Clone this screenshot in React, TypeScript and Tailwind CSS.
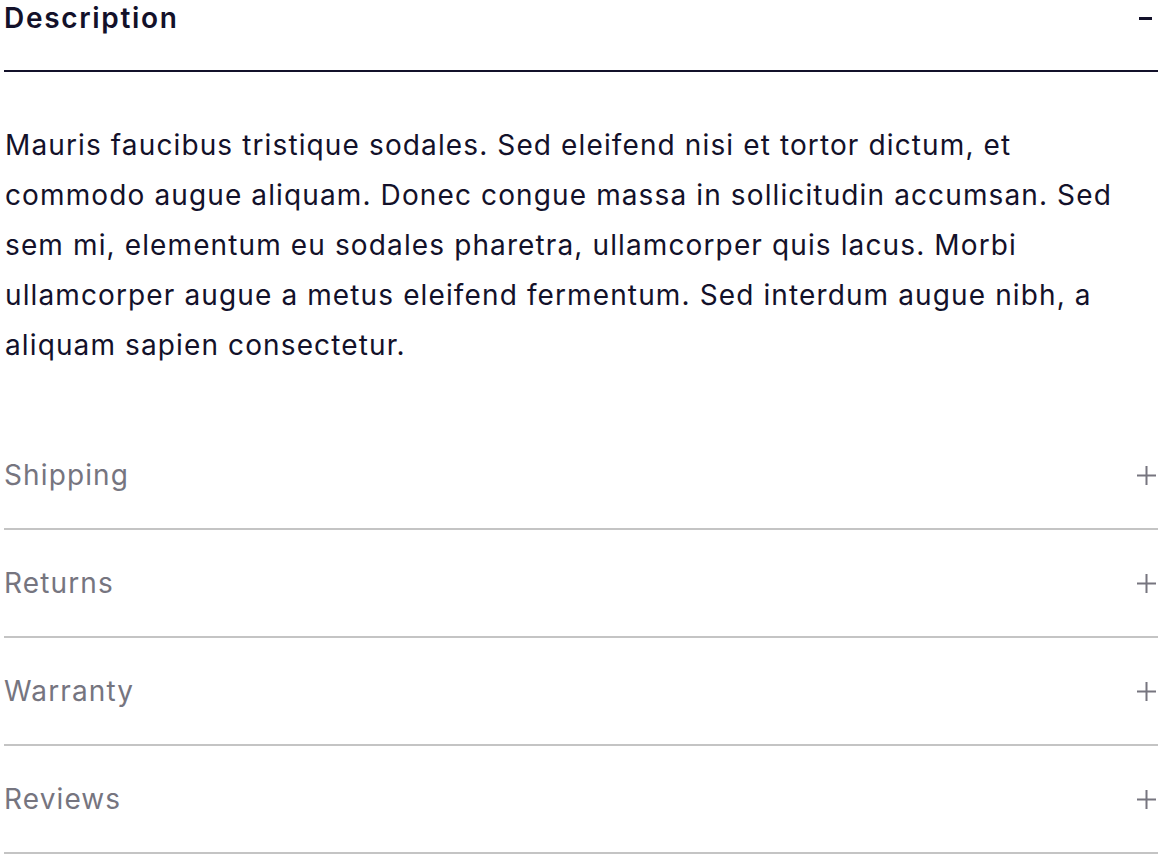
import { useState } from 'react';

const sections = ['Shipping', 'Returns', 'Warranty', 'Reviews'];

function PlusIcon() {
  return (
    <svg width="19" height="19" viewBox="0 0 19 19" fill="none" className="text-[#76757f]">
      <path d="M9.5 0v19M0 9.5h19" stroke="currentColor" strokeWidth="2" />
    </svg>
  );
}

function MinusIcon() {
  return (
    <svg width="13" height="3" viewBox="0 0 13 3" fill="none" className="text-[#13112a]">
      <path d="M0 1.5h13" stroke="currentColor" strokeWidth="3" />
    </svg>
  );
}

export default function App() {
  const [open, setOpen] = useState<string>('Description');

  return (
    <div className="min-h-screen bg-white font-['Inter','Noto_Sans',sans-serif]">
      <div className="ml-1 mr-1.5">
        {/* Open section */}
        <button
          onClick={() => setOpen(open === 'Description' ? '' : 'Description')}
          className="w-full flex items-center justify-between pb-[34px] border-b-2 border-[#13112a] cursor-pointer"
        >
          <span className="text-[28px] leading-[36px] font-semibold tracking-[0.06em] text-[#13112a]">Description</span>
          <span className="mr-[6px]">
            <MinusIcon />
          </span>
        </button>
        {open === 'Description' && (
          <p className="mt-[48px] mb-[52px] pl-px text-[28px] leading-[50px] tracking-[0.04em] text-[#13112a]">
            Mauris faucibus tristique sodales. Sed eleifend nisi et tortor dictum, et commodo augue aliquam. Donec
            congue massa in sollicitudin accumsan. Sed sem mi, elementum eu sodales pharetra, ullamcorper quis lacus.
            Morbi ullamcorper augue a metus eleifend fermentum. Sed interdum augue nibh, a aliquam sapien consectetur.
          </p>
        )}

        {/* Collapsed sections */}
        {sections.map(name => (
          <button
            key={name}
            onClick={() => setOpen(name)}
            className="w-full flex items-center justify-between py-[36px] border-b-2 border-[#c4c4c4] cursor-pointer"
          >
            <span className="text-[28px] leading-[34px] tracking-[0.04em] text-[#76757f]">{name}</span>
            <span className="mr-[2px]">
              <PlusIcon />
            </span>
          </button>
        ))}
      </div>
    </div>
  );
}
